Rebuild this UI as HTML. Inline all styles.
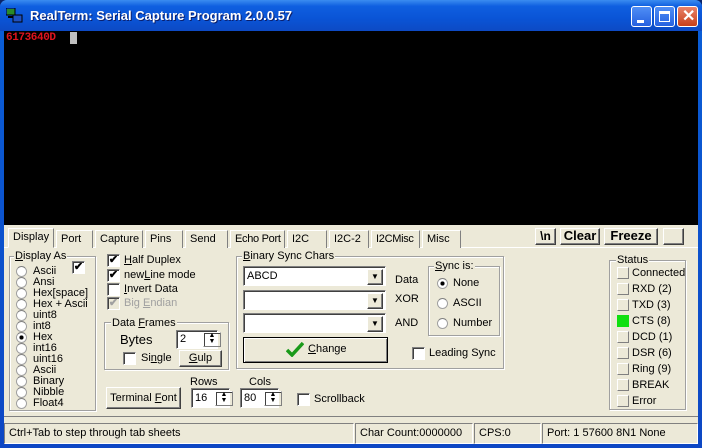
<!DOCTYPE html><html><head><style>
*{margin:0;padding:0;box-sizing:border-box}
body{width:702px;height:448px;overflow:hidden;background:#0a246a;font-family:"Liberation Sans",sans-serif;font-size:11px;color:#000;position:relative}
.a{position:absolute}
.win{left:0;top:0;width:702px;height:448px;background:linear-gradient(#0a5fd8,#0d47c4);border-radius:7px 7px 0 0}
.title{left:0;top:0;width:702px;height:31px;background:linear-gradient(#3a8cf0 0%,#0f5fe0 20%,#0a54d6 60%,#0d4ac4 100%);border-radius:7px 7px 0 0}
.tt{left:30px;top:8px;color:#fff;font-weight:bold;font-size:13px;text-shadow:1px 1px #0a1e6a}
.tb{top:6px;width:21px;height:21px;border:1px solid #fff;border-radius:3px;background:linear-gradient(#4f8ef5,#2661e0)}
.term{left:4px;top:31px;width:694px;height:194px;background:#000}
.panel{left:4px;top:225px;width:694px;height:219px;background:#ece9d8}
.tab{top:230px;height:18px;border:1px solid #fff;border-right:1px solid #808080;border-bottom:none;padding:2px 4px;background:#ece9d8;white-space:nowrap;overflow:hidden}
.page{left:4px;top:247px;width:694px;height:170px;border-top:1px solid #fff;border-bottom:1px solid #808080}
.grp{border:1px solid #a0a0a0;box-shadow:inset 1px 1px #fff,1px 1px #fff}
.gl{background:#ece9d8;padding:0 1px;line-height:12px}
.rb{width:11px;height:11px;border-radius:50%;background:#fff;border:1px solid #a0a0a0;border-top-color:#808080}
.cb{width:13px;height:13px;background:#fff;border:1px solid #808080;border-right-color:#fff;border-bottom-color:#fff;box-shadow:inset 1px 1px #404040;font-size:11px;line-height:11px;text-align:center;font-weight:bold}
.btn{border:1px solid;border-color:#fff #404040 #404040 #fff;box-shadow:inset -1px -1px #808080;background:#ece9d8;text-align:center}
.ed{background:#fff;border:1px solid;border-color:#808080 #fff #fff #808080;box-shadow:inset 1px 1px #404040}
.dd{width:16px;height:16px;top:2px;right:2px}
.st{width:18px;height:13px;border:1px solid;border-color:#fff #808080 #808080 #fff;box-shadow:1px 1px #404040 inset}
.sb{top:423px;height:21px;border:1px solid;border-color:#808080 #fff #fff #808080;padding:3px 4px;white-space:nowrap}
.ri{position:absolute;left:0;height:11px;line-height:11px;white-space:nowrap}
.ri .rb{position:absolute;left:0;top:0}
.ri span{position:absolute;left:17px;top:0}
.si{position:absolute;left:0;height:16px;line-height:13px;white-space:nowrap}
.si i{position:absolute;left:0;top:0;width:12px;height:12px;border:1px solid;border-color:#fff #808080 #808080 #fff}
.si span{position:absolute;left:15px;top:0}
</style></head><body>
<div class="a win"></div>
<div class="a title"></div>
<svg class="a" style="left:6px;top:8px" width="18" height="16"><rect x="1" y="1" width="8" height="6" fill="#2a8a2a"/><rect x="0" y="0" width="9" height="7" fill="none" stroke="#000"/><rect x="7" y="7" width="9" height="7" fill="#2050c0" stroke="#000"/><rect x="2" y="8" width="5" height="2" fill="#000"/></svg>
<div class="a tt">RealTerm: Serial Capture Program 2.0.0.57</div>
<div class="a tb" style="left:631px"><div class="a" style="left:5px;top:13px;width:7px;height:3px;background:#fff"></div></div>
<div class="a tb" style="left:654px"><div class="a" style="left:4px;top:4px;width:11px;height:11px;border:1px solid #fff;border-top-width:3px"></div></div>
<div class="a tb" style="left:677px;background:linear-gradient(#e8826a,#c8401a)"><div class="a" style="left:4px;top:-1px;color:#fff;font-size:16px;font-weight:bold">✕</div></div>
<div class="a term"></div>
<div class="a" style="left:6px;top:32px;color:#e0141e;font-family:'Liberation Mono',monospace;font-size:11px;font-weight:bold;letter-spacing:-0.4px">6173640D</div>
<div class="a" style="left:70px;top:32px;width:7px;height:12px;background:#c0c0c0"></div>
<div class="a panel"></div>
<div class="a page"></div>
<div class="a tab" style="left:8px;top:228px;height:20px;width:46px;border-bottom:1px solid #ece9d8;z-index:2">Display</div>
<div class="a tab" style="left:56px;width:37px">Port</div>
<div class="a tab" style="left:95px;width:48px">Capture</div>
<div class="a tab" style="left:145px;width:38px">Pins</div>
<div class="a tab" style="left:185px;width:43px">Send</div>
<div class="a tab" style="left:230px;width:55px;letter-spacing:-0.3px">Echo Port</div>
<div class="a tab" style="left:287px;width:40px">I2C</div>
<div class="a tab" style="left:329px;width:40px">I2C-2</div>
<div class="a tab" style="left:371px;width:49px;letter-spacing:-0.3px">I2CMisc</div>
<div class="a tab" style="left:422px;width:39px">Misc</div>
<div class="a btn" style="left:535px;top:228px;width:21px;height:17px;font-weight:bold;font-size:12px">\n</div>
<div class="a btn" style="left:560px;top:228px;width:40px;height:17px;font-weight:bold;font-size:13px;line-height:14px">Clear</div>
<div class="a btn" style="left:604px;top:228px;width:54px;height:17px;font-weight:bold;font-size:13px;line-height:14px">Freeze</div>
<div class="a btn" style="left:663px;top:228px;width:21px;height:17px"></div>
<!-- Display As -->
<div class="a grp" style="left:9px;top:256px;width:87px;height:155px"></div>
<div class="a gl" style="left:14px;top:250px"><u>D</u>isplay As</div>
<div class="a cb" style="left:72px;top:261px">✔</div>
<div class="a" style="left:16px;top:266px;width:80px;height:140px">
<div class="ri" style="top:0"><i class="rb"></i><span>Ascii</span></div>
<div class="ri" style="top:11px"><i class="rb"></i><span>Ansi</span></div>
<div class="ri" style="top:22px"><i class="rb"></i><span>Hex[space]</span></div>
<div class="ri" style="top:33px"><i class="rb"></i><span>Hex + Ascii</span></div>
<div class="ri" style="top:44px"><i class="rb"></i><span>uint8</span></div>
<div class="ri" style="top:55px"><i class="rb"></i><span>int8</span></div>
<div class="ri" style="top:66px"><i class="rb" style="background:radial-gradient(#000 30%,#fff 36%)"></i><span>Hex</span></div>
<div class="ri" style="top:77px"><i class="rb"></i><span>int16</span></div>
<div class="ri" style="top:88px"><i class="rb"></i><span>uint16</span></div>
<div class="ri" style="top:99px"><i class="rb"></i><span>Ascii</span></div>
<div class="ri" style="top:110px"><i class="rb"></i><span>Binary</span></div>
<div class="ri" style="top:121px"><i class="rb"></i><span>Nibble</span></div>
<div class="ri" style="top:132px"><i class="rb"></i><span>Float4</span></div>
</div>
<!-- checkboxes -->
<div class="a cb" style="left:107px;top:254px">✔</div><div class="a" style="left:124px;top:254px"><u>H</u>alf Duplex</div>
<div class="a cb" style="left:107px;top:269px">✔</div><div class="a" style="left:124px;top:269px">new<u>L</u>ine mode</div>
<div class="a cb" style="left:107px;top:283px"></div><div class="a" style="left:124px;top:283px"><u>I</u>nvert Data</div>
<div class="a cb" style="left:107px;top:297px;background:#ece9d8;color:#a0a0a0">✔</div><div class="a" style="left:124px;top:297px;color:#a0a0a0">Big <u>E</u>ndian</div>
<div class="a grp" style="left:104px;top:322px;width:125px;height:48px"></div>
<div class="a gl" style="left:111px;top:317px">Data <u>F</u>rames</div>
<div class="a" style="left:120px;top:332px;font-size:13px">Bytes</div>
<div class="a ed" style="left:176px;top:330px;width:42px;height:19px;padding:2px 3px">2</div>
<div class="a st" style="left:203px;top:332px;height:15px;font-size:7px;line-height:6px;text-align:center">▲<br>▼</div>
<div class="a cb" style="left:123px;top:352px"></div><div class="a" style="left:141px;top:352px">Si<u>n</u>gle</div>
<div class="a btn" style="left:179px;top:350px;width:43px;height:17px;line-height:15px"><u>G</u>ulp</div>
<div class="a btn" style="left:106px;top:387px;width:75px;height:22px;line-height:20px">Terminal <u>F</u>ont</div>
<div class="a" style="left:190px;top:376px">Rows</div>
<div class="a ed" style="left:191px;top:388px;width:39px;height:20px;padding:3px 3px">16</div>
<div class="a st" style="left:215px;top:391px;height:15px;font-size:7px;line-height:6px;text-align:center">▲<br>▼</div>
<div class="a" style="left:249px;top:376px">Cols</div>
<div class="a ed" style="left:240px;top:388px;width:39px;height:20px;padding:3px 3px">80</div>
<div class="a st" style="left:264px;top:391px;height:15px;font-size:7px;line-height:6px;text-align:center">▲<br>▼</div>
<div class="a cb" style="left:297px;top:393px"></div><div class="a" style="left:314px;top:393px">Scrollback</div>
<!-- Binary sync -->
<div class="a grp" style="left:236px;top:256px;width:268px;height:113px"></div>
<div class="a gl" style="left:242px;top:250px"><u>B</u>inary Sync Chars</div>
<div class="a ed" style="left:243px;top:266px;width:143px;height:20px;padding:3px 3px">ABCD<div class="a btn dd" style="font-size:8px;line-height:14px">▼</div></div>
<div class="a ed" style="left:243px;top:290px;width:143px;height:20px"><div class="a btn dd" style="font-size:8px;line-height:14px">▼</div></div>
<div class="a ed" style="left:243px;top:313px;width:143px;height:20px"><div class="a btn dd" style="font-size:8px;line-height:14px">▼</div></div>
<div class="a" style="left:395px;top:274px">Data</div>
<div class="a" style="left:395px;top:293px">XOR</div>
<div class="a" style="left:395px;top:317px">AND</div>
<div class="a" style="left:243px;top:337px;width:145px;height:26px;border:1px solid #000;background:#ece9d8;box-shadow:inset 1px 1px #fff,inset -1px -1px #808080"></div>
<svg class="a" style="left:286px;top:341px" width="18" height="16"><path d="M1 9 L6 14 L17 2" stroke="#1a9a1a" stroke-width="3.5" fill="none"/></svg>
<div class="a" style="left:308px;top:343px"><u>C</u>hange</div>
<div class="a grp" style="left:428px;top:266px;width:72px;height:70px"></div>
<div class="a gl" style="left:434px;top:260px"><u>S</u>ync is:</div>
<div class="a rb" style="left:437px;top:278px;background:radial-gradient(#000 30%,#fff 36%)"></div><div class="a" style="left:453px;top:277px">None</div>
<div class="a rb" style="left:437px;top:298px"></div><div class="a" style="left:453px;top:297px">ASCII</div>
<div class="a rb" style="left:437px;top:318px"></div><div class="a" style="left:453px;top:317px">Number</div>
<div class="a cb" style="left:412px;top:347px"></div><div class="a" style="left:429px;top:347px">Leading Sync</div>
<!-- Status -->
<div class="a grp" style="left:609px;top:260px;width:77px;height:150px"></div>
<div class="a gl" style="left:616px;top:254px">Status</div>
<div class="a" style="left:617px;top:267px;width:68px;height:144px">
<div class="si" style="top:0"><i></i><span>Connected</span></div>
<div class="si" style="top:16px"><i></i><span>RXD (2)</span></div>
<div class="si" style="top:32px"><i></i><span>TXD (3)</span></div>
<div class="si" style="top:48px"><i style="background:#10e010;border:none"></i><span>CTS (8)</span></div>
<div class="si" style="top:64px"><i></i><span>DCD (1)</span></div>
<div class="si" style="top:80px"><i></i><span>DSR (6)</span></div>
<div class="si" style="top:96px"><i></i><span>Ring (9)</span></div>
<div class="si" style="top:112px"><i></i><span>BREAK</span></div>
<div class="si" style="top:128px"><i></i><span>Error</span></div>
</div>
<!-- status bar -->
<div class="a sb" style="left:4px;width:350px">Ctrl+Tab to step through tab sheets</div>
<div class="a sb" style="left:355px;width:118px">Char Count:0000000</div>
<div class="a sb" style="left:474px;width:67px">CPS:0</div>
<div class="a sb" style="left:542px;width:156px">Port: 1 57600 8N1 None</div>
</body></html>
